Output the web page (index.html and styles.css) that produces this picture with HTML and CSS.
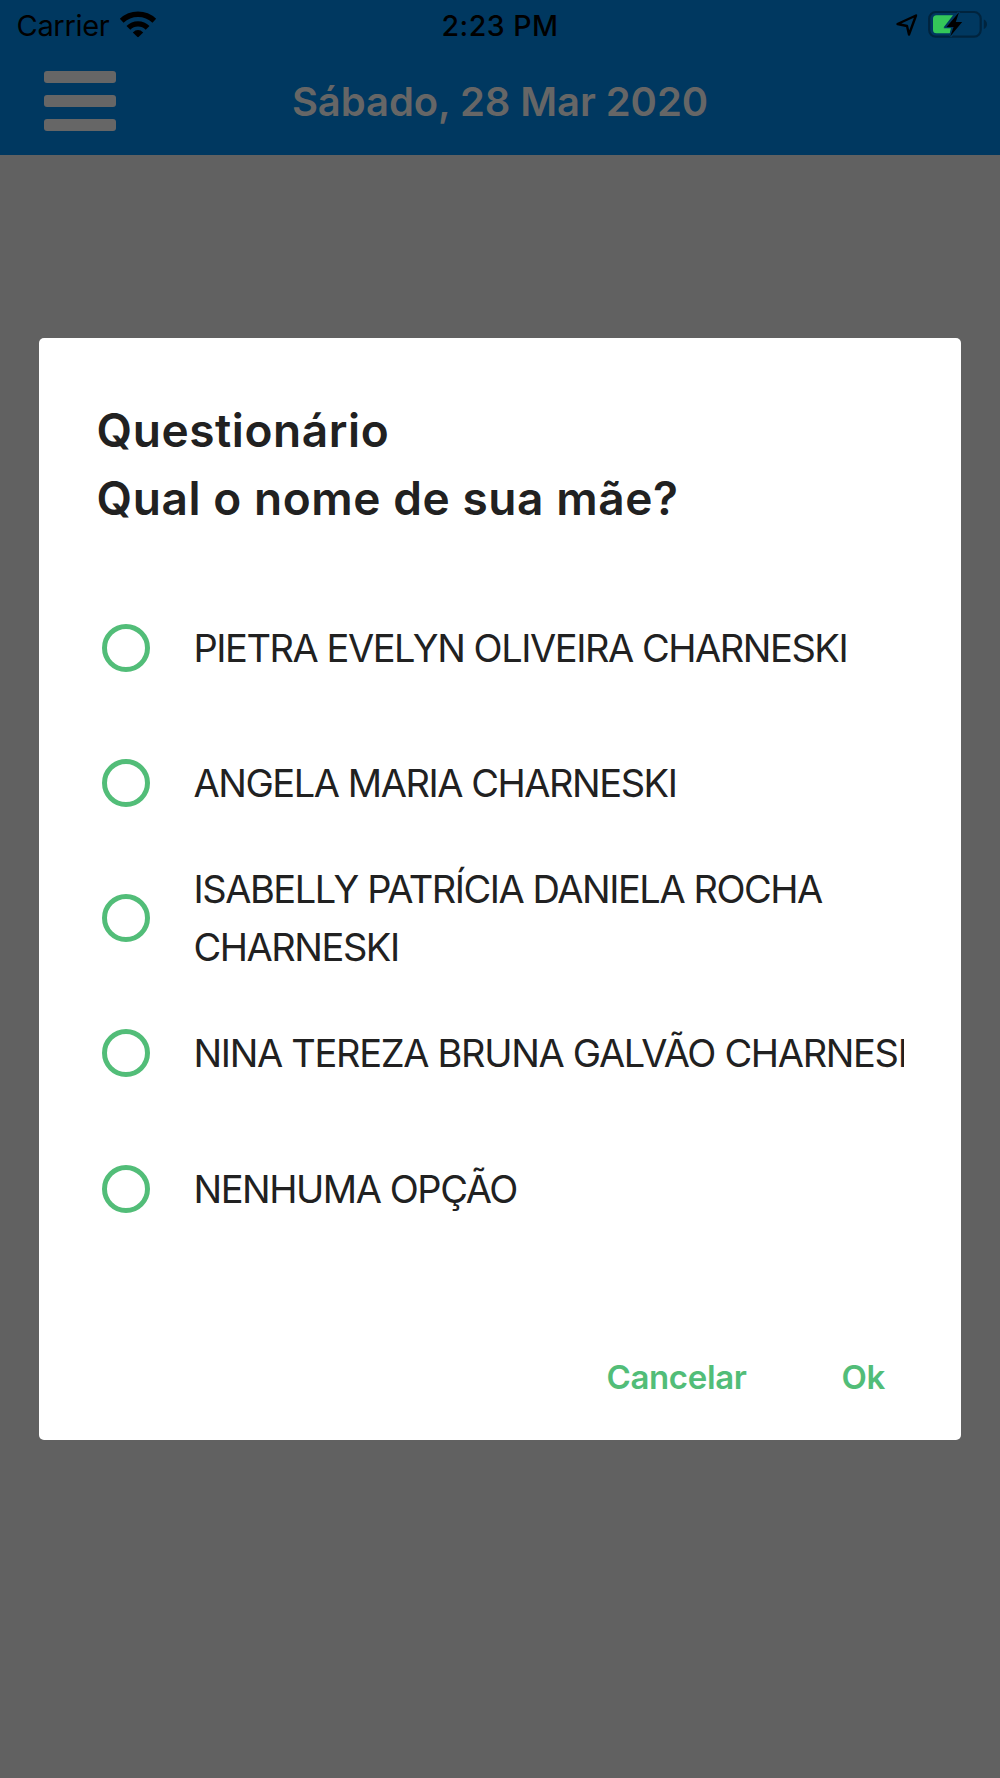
FILE: index.html
```html
<!DOCTYPE html>
<html lang="pt-BR">
<head>
  <meta charset="UTF-8" />
  <meta name="viewport" content="width=device-width, initial-scale=1.0"/>
  <title>Questionário</title>
  <link rel="stylesheet" href="styles.css">
</head>
<body>
  <header class="header">
    <!-- Barra de status -->
    <div class="status-bar">
      <div class="status-left">
        <span class="carrier">Carrier</span>
        <svg class="wifi" width="38" height="29" viewBox="0 0 38 29">
          <path d="M2.7 10.8A23.7 23.7 0 0 1 35.3 10.8" fill="none" stroke="#000" stroke-width="5.4"/>
          <path d="M9.4 17.8A13.6 13.6 0 0 1 28.6 17.8" fill="none" stroke="#000" stroke-width="5.4"/>
          <path d="M13.8 22.4Q19 17.6 24.2 22.4L19.8 26.8Q19 27.5 18.2 26.8Z"/>
        </svg>
      </div>
      <span class="time">2:23 PM</span>
      <div class="status-right">
        <svg width="94" height="30" viewBox="894 9 94 30">
          <path d="M916 15.5L897.5 24L907 26L909 34.5Z" fill="none" stroke="#000" stroke-width="2.4" stroke-linejoin="round"/>
          <rect x="929.2" y="12" width="51.5" height="24.6" rx="6.5" fill="none" stroke="#00243e" stroke-width="2.2"/>
          <path d="M983.8 19.5Q987 21 987 24.3Q987 27.6 983.8 29.1Z" fill="#00243e"/>
          <path d="M936.5 15.2H953L943.5 27.5H951L949.8 33.3H936.5Q933 33.3 933 29.8V18.7Q933 15.2 936.5 15.2Z" fill="#34c759"/>
          <path d="M959 12.3L946.5 27H953.6L950.3 36.3L962.2 22H955.8Z" fill="#000" stroke="#003860" stroke-width="2.6" paint-order="stroke"/>
        </svg>
      </div>
    </div>

    <!-- Menu e data -->
    <div class="nav">
      <button class="menu" aria-label="Menu">
        <span></span>
        <span></span>
        <span></span>
      </button>
      <h1 class="date">Sábado, 28 Mar 2020</h1>
    </div>
  </header>

  <!-- Modal do questionário -->
  <main class="content">
    <form class="modal">
      <h2 class="title">Questionário<br>Qual o nome de sua mãe?</h2>

      <div class="options">
        <label class="option"><input type="radio" name="mae"><span>PIETRA EVELYN OLIVEIRA CHARNESKI</span></label>
        <label class="option"><input type="radio" name="mae"><span>ANGELA MARIA CHARNESKI</span></label>
        <label class="option wrap"><input type="radio" name="mae"><span>ISABELLY PATRÍCIA DANIELA ROCHA CHARNESKI</span></label>
        <label class="option long"><input type="radio" name="mae"><span>NINA TEREZA BRUNA GALVÃO CHARNESKI</span></label>
        <label class="option"><input type="radio" name="mae"><span>NENHUMA OPÇÃO</span></label>
      </div>

      <div class="actions">
        <button type="button" class="action">Cancelar</button>
        <button type="button" class="action">Ok</button>
      </div>
    </form>
  </main>
</body>
</html>
```
FILE: styles.css
```css
* {
  box-sizing: border-box;
}

body {
  margin: 0;
  height: 1778px;
  overflow: hidden;
  background-color: #616161;
  font-family: Inter, "Liberation Sans", sans-serif;
  color: #212121;
}

button {
  padding: 0;
  border: none;
  background: none;
  font-family: inherit;
  cursor: pointer;
}

.header {
  height: 155px;
  background-color: #003860;
}

/* Barra de status */
.status-bar {
  display: grid;
  grid-template-columns: 1fr auto 1fr;
  height: 50px;
  padding: 0 12px;
  color: #000;
}

.status-left {
  display: flex;
  align-items: flex-start;
  padding-left: 4.5px;
}

.carrier {
  font-size: 29px;
  letter-spacing: -0.3px;
  line-height: 51px;
}

.wifi {
  margin: 10px 0 0 10px;
}

.time {
  font-size: 28.5px;
  font-weight: 550;
  letter-spacing: 0.5px;
  line-height: 51px;
}

.status-right {
  display: flex;
  justify-content: flex-end;
  padding-top: 9px;
}

/* Menu e data */
.nav {
  display: grid;
  grid-template-columns: 72px 1fr 72px;
  align-items: center;
  height: 102px;
  padding: 0 44px;
}

.menu {
  display: flex;
  flex-direction: column;
  gap: 12px;
}

.menu span {
  width: 72px;
  height: 12px;
  border-radius: 3px;
  background-color: #666;
}

.date {
  margin: 0;
  text-align: center;
  color: #666;
  font-size: 40px;
  font-weight: 580;
  letter-spacing: -0.08px;
}

/* Modal */
.content {
  padding: 183px 39px 0;
}

.modal {
  height: 1101.5px;
  padding: 59px 57.5px 0;
  border-radius: 5px;
  background-color: #fff;
}

.title {
  margin: 0 0 48.2px;
  font-size: 46px;
  font-weight: 600;
  letter-spacing: 0.58px;
  line-height: 67.5px;
}

.options {
  overflow: hidden;
}

.option {
  display: flex;
  align-items: center;
  height: 135.2px;
  font-size: 38px;
  letter-spacing: -1.45px;
  line-height: 58px;
  white-space: nowrap;
}

.option.wrap {
  white-space: normal;
}

.option.long {
  letter-spacing: -1.32px;
}

.option input {
  appearance: none;
  flex: none;
  width: 48px;
  height: 48px;
  margin: 0 44px 0 5px;
  border: 5px solid #52bd78;
  border-radius: 50%;
}

.actions {
  display: flex;
  justify-content: flex-end;
  gap: 95px;
  padding: 96.3px 18.5px 0 0;
}

.action {
  color: #52bd78;
  font-size: 33px;
  font-weight: 600;
  letter-spacing: -0.35px;
  line-height: 50px;
}
```
